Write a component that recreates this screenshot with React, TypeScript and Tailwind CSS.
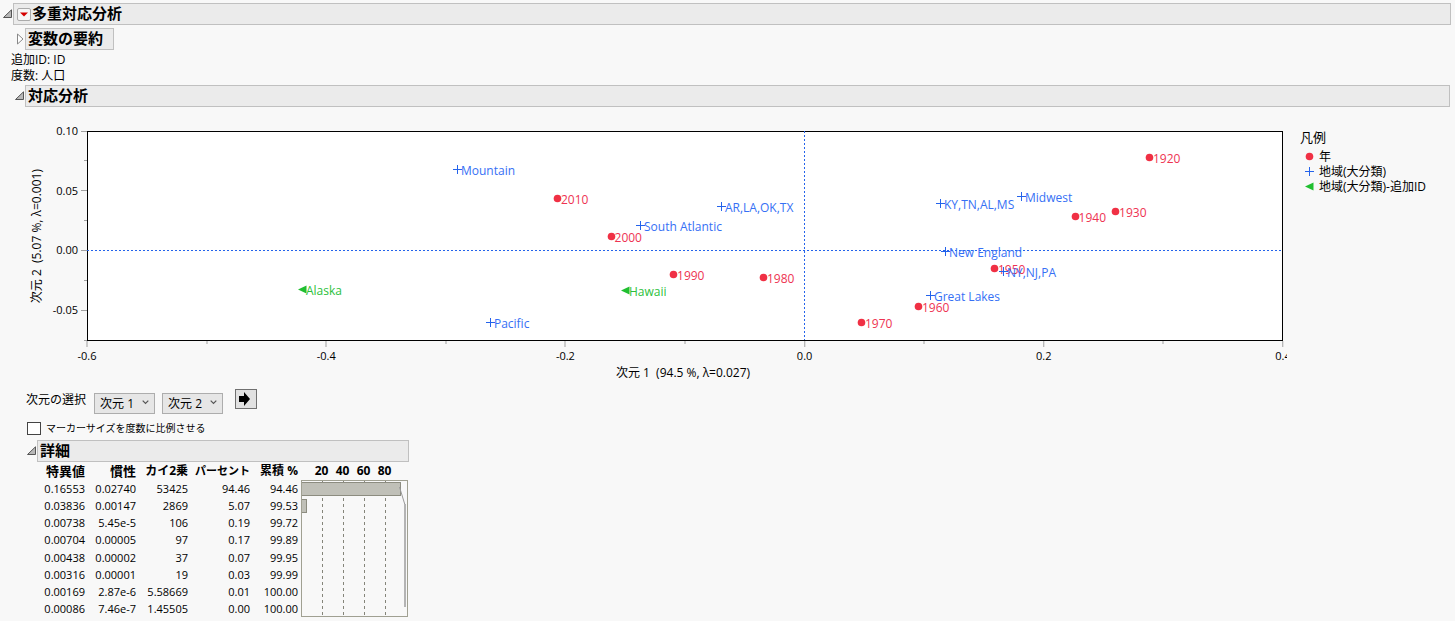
import { useState } from "react";

type Kind = "year" | "region" | "extra";

const POINTS: { label: string; x: number; y: number; kind: Kind }[] = [
  { label: "1920", x: 0.2887, y: 0.0779, kind: "year" },
  { label: "1930", x: 0.2603, y: 0.0333, kind: "year" },
  { label: "1940", x: 0.2264, y: 0.0289, kind: "year" },
  { label: "1950", x: 0.159, y: -0.0143, kind: "year" },
  { label: "1960", x: 0.0954, y: -0.0469, kind: "year" },
  { label: "1970", x: 0.0477, y: -0.0602, kind: "year" },
  { label: "1980", x: -0.0343, y: -0.0222, kind: "year" },
  { label: "1990", x: -0.1096, y: -0.0199, kind: "year" },
  { label: "2000", x: -0.1619, y: 0.0117, kind: "year" },
  { label: "2010", x: -0.2067, y: 0.0435, kind: "year" },
  { label: "Mountain", x: -0.2904, y: 0.0678, kind: "region" },
  { label: "Pacific", x: -0.2628, y: -0.0601, kind: "region" },
  { label: "South Atlantic", x: -0.1372, y: 0.0213, kind: "region" },
  { label: "AR,LA,OK,TX", x: -0.0695, y: 0.0369, kind: "region" },
  { label: "KY,TN,AL,MS", x: 0.1138, y: 0.0394, kind: "region" },
  { label: "Midwest", x: 0.1816, y: 0.0452, kind: "region" },
  { label: "New England", x: 0.118, y: -0.0002, kind: "region" },
  { label: "NY,NJ,PA", x: 0.1665, y: -0.0174, kind: "region" },
  { label: "Great Lakes", x: 0.1054, y: -0.0375, kind: "region" },
  { label: "Alaska", x: -0.4201, y: -0.0327, kind: "extra" },
  { label: "Hawaii", x: -0.1498, y: -0.0335, kind: "extra" },
];

const LEGEND: { label: string; kind: Kind }[] = [
  { label: "年", kind: "year" },
  { label: "地域(大分類)", kind: "region" },
  { label: "地域(大分類)-追加ID", kind: "extra" },
];

const X_TICKS = [-0.6, -0.5, -0.4, -0.3, -0.2, -0.1, 0, 0.1, 0.2, 0.3, 0.4];
const Y_TICKS = [0.1, 0.075, 0.05, 0.025, 0, -0.025, -0.05, -0.075];

const ROWS = [
  ["0.16553", "0.02740", "53425", "94.46", "94.46"],
  ["0.03836", "0.00147", "2869", "5.07", "99.53"],
  ["0.00738", "5.45e-5", "106", "0.19", "99.72"],
  ["0.00704", "0.00005", "97", "0.17", "99.89"],
  ["0.00438", "0.00002", "37", "0.07", "99.95"],
  ["0.00316", "0.00001", "19", "0.03", "99.99"],
  ["0.00169", "2.87e-6", "5.58669", "0.01", "100.00"],
  ["0.00086", "7.46e-7", "1.45505", "0.00", "100.00"],
];

const xPct = (x: number) => `${(x + 0.6) * 100}%`;
const yPct = (y: number) => `${((0.1 - y) / 0.175) * 100}%`;

const TEXT_COLOR: Record<Kind, string> = {
  year: "text-[#ee3352]",
  region: "text-[#3670f5]",
  extra: "text-[#2cbf3c]",
};

function Marker({ kind }: { kind: Kind }) {
  return (
    <svg width="11" height="11" viewBox="0 0 11 11" className="block shrink-0">
      {kind === "year" && <circle cx="5.5" cy="5.5" r="3.8" fill="#f03044" />}
      {kind === "region" && <path d="M1 5.5h9M5.5 1v9" stroke="#2463eb" fill="none" />}
      {kind === "extra" && <path d="M1 5.5 9.5 1.5v8z" fill="#20bf30" />}
    </svg>
  );
}

function Disclosure({ open = true }: { open?: boolean }) {
  return (
    <svg width="11" height="12" viewBox="0 0 11 12" className="block shrink-0">
      {open ? (
        <path d="M1.5 9.5h8V1.8z" fill="#b8b8b8" stroke="#555" />
      ) : (
        <path d="M3.5 1v10L9 6z" fill="#fff" stroke="#888" />
      )}
    </svg>
  );
}

function OutlineBar({ title, open, menu, fit }: { title: string; open?: boolean; menu?: boolean; fit?: boolean }) {
  return (
    <div className="flex items-center">
      <button type="button" aria-label={title} className="w-[11px] shrink-0">
        <Disclosure open={open} />
      </button>
      <div className={`flex items-center h-[22px] border border-[#c0c0c0] bg-[#ebebeb] pl-[2px] ${fit ? "pr-[10px]" : "flex-1"}`}>
        {menu && (
          <button type="button" aria-label="メニュー" className="ml-px mr-px w-[14px] h-[13px] flex items-center justify-center rounded-xs border border-[#aaa] bg-[#f6f6f6]">
            <svg width="8" height="5" viewBox="0 0 8 5"><path d="M0 .5h8L4 4.5z" fill="#d40000" /></svg>
          </button>
        )}
        <h2 className="text-[15px] leading-[18px] pb-[2px] font-bold whitespace-nowrap">{title}</h2>
      </div>
    </div>
  );
}

function ScatterPlot() {
  return (
    <div className="flex pl-[26px] pt-6">
      <div className="w-[22px] h-[210px] flex items-center justify-center text-[12px]">
        <span className="whitespace-pre [writing-mode:vertical-rl] [text-orientation:sideways] rotate-180">{"次元 2  (5.07 %, λ=0.001)"}</span>
      </div>

      {/* y axis */}
      <div className="relative w-[39px] h-[209px] shrink-0">
        {Y_TICKS.map((t, i) => (
          <div key={t} className="absolute right-0 flex items-center h-3 -mt-[6px]" style={{ top: yPct(t) }}>
            {i % 2 === 0 && <span className="text-[11px] leading-3 mr-[3px]">{t.toFixed(2)}</span>}
            <i className={`h-px bg-[#a0a0a0] ${i % 2 === 0 ? "w-[6px]" : "w-[3px]"}`} />
          </div>
        ))}
      </div>

      <div className="flex-1 min-w-0">
        <div className="relative h-[210px] border border-black bg-white">
          <div className="absolute -top-px bottom-0 -left-px right-0">
            <svg width="100%" height="100%" className="absolute inset-0">
              <line x1="0" x2="100%" y1={yPct(0)} y2={yPct(0)} stroke="#2463eb" strokeDasharray="2 2" shapeRendering="crispEdges" />
              <line x1={xPct(0)} x2={xPct(0)} y1="0" y2="100%" stroke="#2463eb" strokeDasharray="2 2" shapeRendering="crispEdges" />
            </svg>
            {POINTS.map((p) => (
              <div key={p.label} className="absolute size-0" style={{ left: xPct(p.x), top: yPct(p.y) }}>
                <div className={`flex items-center h-[15px] w-max -ml-[5px] -mt-[7px] text-[12px] leading-[15px] ${TEXT_COLOR[p.kind]}`}>
                  <Marker kind={p.kind} />
                  <span className="pt-[2px] -ml-[2px]">{p.label}</span>
                </div>
              </div>
            ))}
          </div>
        </div>

        {/* x axis */}
        <div className="-ml-4 pl-4 -mr-1 pr-1 h-[23px] overflow-hidden">
          <div className="relative h-full">
            {X_TICKS.map((t, i) => (
              <div key={t} className="absolute top-0 flex flex-col items-center -translate-x-1/2" style={{ left: xPct(t) }}>
                <i className={`w-px bg-[#a0a0a0] ${i % 2 === 0 ? "h-[6px]" : "h-[3px]"}`} />
                {i % 2 === 0 && <span className="text-[11px] leading-3 mt-[3px]">{t.toFixed(1)}</span>}
              </div>
            ))}
          </div>
        </div>
        <p className="text-center text-[12px] leading-4 pt-px pr-1 whitespace-pre">{"次元 1  (94.5 %, λ=0.027)"}</p>
      </div>

      <div className="w-[172px] shrink-0 pl-[17px] text-[12px]">
        <p className="text-[13px] leading-3">凡例</p>
        <ul className="pt-[6px]">
          {LEGEND.map((l) => (
            <li key={l.kind} className="flex items-center h-[15px] pl-1 gap-1 whitespace-nowrap">
              <Marker kind={l.kind} />
              {l.label}
            </li>
          ))}
        </ul>
      </div>
    </div>
  );
}

function AxisSelect({ label, value, onChange }: { label: string; value: string; onChange: (v: string) => void }) {
  return (
    <div className="relative mt-1">
      <select
        aria-label={label}
        value={value}
        onChange={(e) => onChange(e.target.value)}
        className="block appearance-none w-[61px] h-[21px] pl-[5px] text-[12px] leading-4 border border-[#adadad] bg-[#e6e6e6]"
      >
        <option>次元 1</option>
        <option>次元 2</option>
        <option>次元 3</option>
      </select>
      <svg width="7" height="5" viewBox="0 0 7 5" className="absolute right-[6px] top-[7px] pointer-events-none">
        <path d="M.7.7 3.5 3.5 6.3.7" fill="none" stroke="#555" strokeWidth="1.2" />
      </svg>
    </div>
  );
}

function ParetoChart() {
  return (
    <svg width="107" height="137" viewBox="0 0 107 137" className="block">
      {[21.5, 42.5, 63.5, 84.5].map((x) => (
        <line key={x} x1={x} x2={x} y1="0" y2="136" stroke="#85857a" strokeDasharray="3 3" />
      ))}
      <rect x=".5" y="2.5" width="99" height="13" fill="#c0c0b8" stroke="#8c8c80" />
      <rect x=".5" y="19.5" width="5" height="13" fill="#c0c0b8" stroke="#8c8c80" />
      <path d="M98.5 7 104 25" fill="none" stroke="#999" />
      <path d="M104 24v103" fill="none" stroke="#b4b4b4" strokeWidth="2" />
      <rect x=".5" y=".5" width="106" height="136" fill="none" stroke="#a0a092" />
    </svg>
  );
}

function DetailTable() {
  return (
    <table className="table-fixed w-[382px] border-collapse text-right text-[11px] whitespace-nowrap">
      <colgroup>
        <col className="w-[59px]" />
        <col className="w-[51px]" />
        <col className="w-[52px]" />
        <col className="w-[62px]" />
        <col className="w-[48px]" />
        <col />
      </colgroup>
      <thead>
        <tr className="h-[18px] text-[12px] leading-[18px]">
          <th className="text-[13px]">特異値</th>
          <th className="text-[13px]">慣性</th>
          <th>カイ2乗</th>
          <th className="text-[11px]">パーセント</th>
          <th>累積 %</th>
          <th>
            <div className="flex pl-[13px] text-center">
              {[20, 40, 60, 80].map((n) => <span key={n} className="w-[21px]">{n}</span>)}
            </div>
          </th>
        </tr>
      </thead>
      <tbody>
        {ROWS.map((row, i) => (
          <tr key={row[0]} className="h-[17px] leading-[17px]">
            {row.map((cell, j) => <td key={j} className="p-0">{cell}</td>)}
            {i === 0 && <td rowSpan={8} className="p-0 pl-[3px] align-top"><ParetoChart /></td>}
          </tr>
        ))}
      </tbody>
    </table>
  );
}

export default function App() {
  const [dimX, setDimX] = useState("次元 1");
  const [dimY, setDimY] = useState("次元 2");
  const [scaled, setScaled] = useState(false);

  return (
    <main className="min-h-screen bg-[#f8f8f8] text-black pt-[3px] font-['Open_Sans','Noto_Sans_CJK_JP',sans-serif]">
      <div className="pl-[2px] pr-1">
        <OutlineBar title="多重対応分析" menu />
      </div>
      <div className="pl-[14px] pt-[3px]">
        <OutlineBar title="変数の要約" open={false} fit />
      </div>
      <div className="pl-[11px] pt-[2px] pb-px text-[12px] leading-4">
        <p>追加ID: ID</p>
        <p>度数: 人口</p>
      </div>
      <div className="pl-[14px] pr-[5px]">
        <OutlineBar title="対応分析" />
      </div>

      <ScatterPlot />

      <div className="flex items-start pl-[26px] pt-2 text-[12px]">
        <span className="leading-[22px] mr-2">次元の選択</span>
        <AxisSelect label="横軸" value={dimX} onChange={setDimX} />
        <div className="w-[7px]" />
        <AxisSelect label="縦軸" value={dimY} onChange={setDimY} />
        <button type="button" aria-label="次へ" className="ml-3 w-[22px] h-5 flex items-center justify-center border border-[#707070] bg-[#e1e1e1]">
          <svg width="12" height="14" viewBox="0 0 12 14" className="mr-[3px]"><path d="M0 4h5V0l6 7-6 7v-4H0z" fill="#000" /></svg>
        </button>
      </div>

      <label className="flex items-center gap-[5px] w-max ml-[27px] mt-[5px] h-[18px] text-[10px]">
        <input
          type="checkbox"
          checked={scaled}
          onChange={(e) => setScaled(e.target.checked)}
          className="appearance-none w-[14px] h-[13px] border border-[#444] bg-white checked:bg-[#444]"
        />
        マーカーサイズを度数に比例させる
      </label>

      <section className="w-[409px] pl-[26px] pt-[3px]">
        <OutlineBar title="詳細" />
        <DetailTable />
      </section>
    </main>
  );
}
